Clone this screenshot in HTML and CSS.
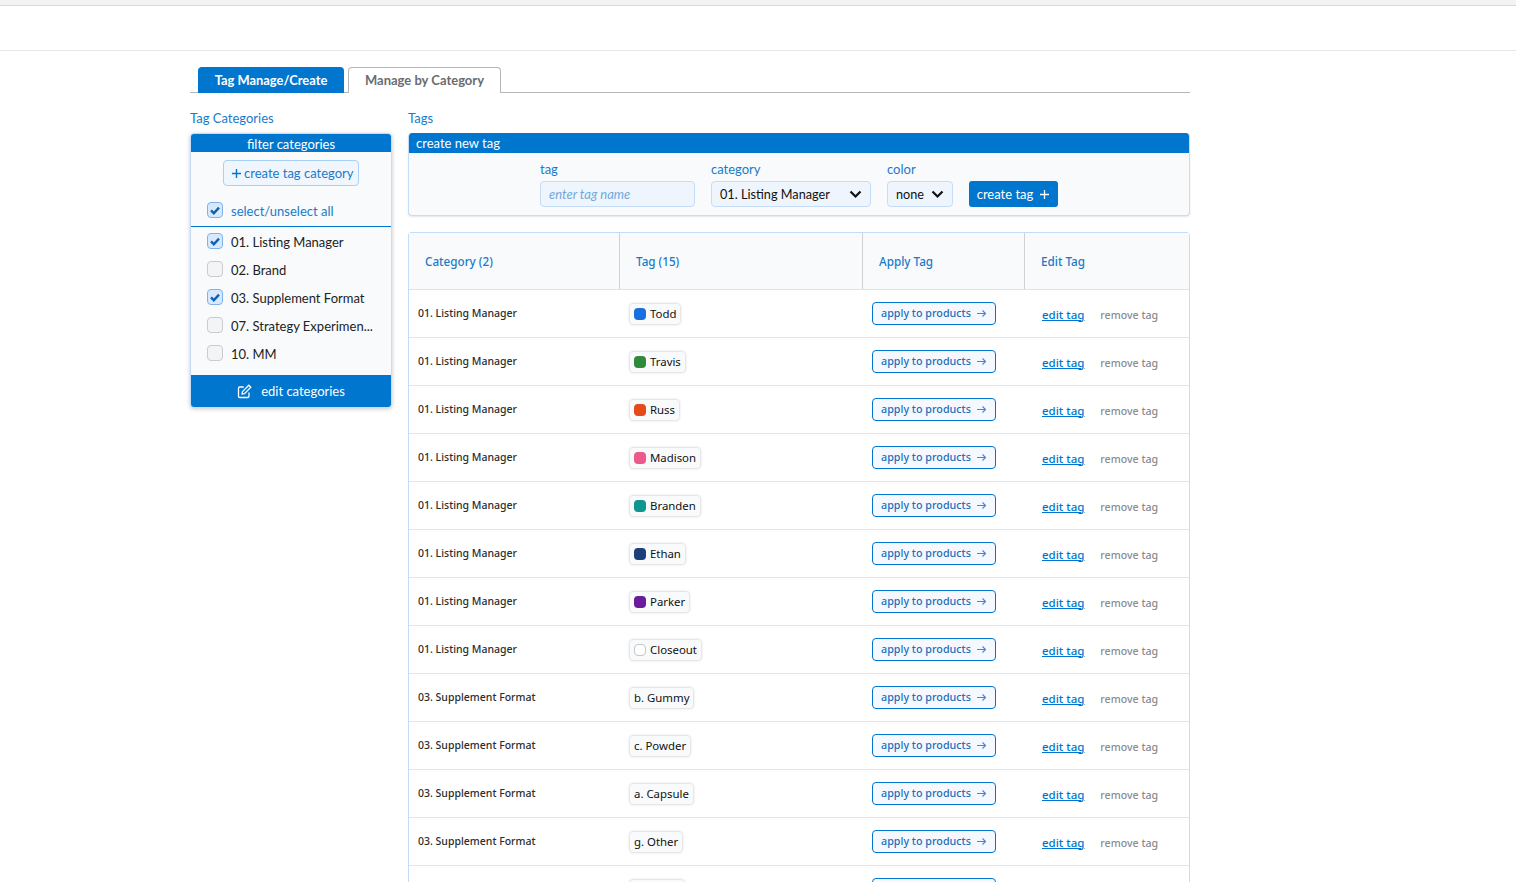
FILE: index.html
```html
<!DOCTYPE html>
<html lang="en">
<head>
<meta charset="utf-8">
<title>Tags</title>
<link rel="stylesheet" href="styles.css">
</head>
<body>
<div class="topband"></div>
<div class="topbar"></div>
<main class="page">
  <nav class="tabs">
    <a class="tab active">Tag Manage/Create</a>
    <a class="tab">Manage by Category</a>
  </nav>
  <div class="columns">
    <aside class="side">
      <h2 class="title">Tag Categories</h2>
      <div class="filter">
        <div class="bar center">filter categories</div>
        <div class="create-wrap"><button class="outline-btn"><svg width="11" height="11" viewBox="0 0 11 11"><path d="M5.5 1v9M1 5.5h9" stroke="#0176ce" stroke-width="1.4" fill="none"/></svg>create tag category</button></div>
        <label class="check all"><span class="box on"><svg width="12" height="12" viewBox="0 0 12 12"><path d="M2 6.4l2.8 2.8L10 3.6" stroke="#0e62b0" stroke-width="2.4" fill="none"/></svg></span><span class="blue">select/unselect all</span></label>
        <div class="list">
          <label class="check"><span class="box on"><svg width="12" height="12" viewBox="0 0 12 12"><path d="M2 6.4l2.8 2.8L10 3.6" stroke="#0e62b0" stroke-width="2.4" fill="none"/></svg></span>01. Listing Manager</label>
          <label class="check"><span class="box"></span>02. Brand</label>
          <label class="check"><span class="box on"><svg width="12" height="12" viewBox="0 0 12 12"><path d="M2 6.4l2.8 2.8L10 3.6" stroke="#0e62b0" stroke-width="2.4" fill="none"/></svg></span>03. Supplement Format</label>
          <label class="check"><span class="box"></span>07. Strategy Experimen...</label>
          <label class="check"><span class="box"></span>10. MM</label>
        </div>
        <div class="edit-cats"><svg width="15" height="15" viewBox="0 0 15 15" fill="none" stroke="#fff" stroke-width="1.3"><path d="M12 8.5v3.7a1.3 1.3 0 0 1-1.3 1.3H2.8a1.3 1.3 0 0 1-1.3-1.3V4.3A1.3 1.3 0 0 1 2.8 3h4"/><path d="M5.5 7.6L11.8 1.2l2 2-6.300 6.400-2.400.4z"/></svg>edit categories</div>
      </div>
    </aside>
    <section class="content">
      <h2 class="title">Tags</h2>
      <div class="newtag">
        <div class="bar">create new tag</div>
        <form class="newtag-form">
          <div class="field f-tag"><span class="lab">tag</span><span class="input ph">enter tag name</span></div>
          <div class="field f-cat"><span class="lab">category</span><span class="input sel">01. Listing Manager<svg width="13" height="9" viewBox="0 0 13 9"><path d="M1.500 1.500l5 5 5-5" stroke="#111" stroke-width="2.200" fill="none"/></svg></span></div>
          <div class="field f-col"><span class="lab">color</span><span class="input sel">none<svg width="13" height="9" viewBox="0 0 13 9"><path d="M1.500 1.500l5 5 5-5" stroke="#111" stroke-width="2.200" fill="none"/></svg></span></div>
          <button type="button" class="solid-btn">create tag<svg width="11" height="11" viewBox="0 0 11 11"><path d="M5.500 1v9M1 5.500h9" stroke="#fff" stroke-width="1.300" fill="none"/></svg></button>
        </form>
      </div>
      <div class="table">
        <div class="row head">
          <div>Category (2)</div><div>Tag (15)</div><div>Apply Tag</div><div>Edit Tag</div>
        </div>
        <div id="rows"></div>
      </div>
    </section>
  </div>
</main>
<script src="app.js"></script>
</body>
</html>
```
FILE: styles.css
```css
* { box-sizing: border-box; }
html, body { margin: 0; height: 882px; overflow: hidden; background: #fff; }
body { font-family: Lato, "Noto Sans", sans-serif; color: #1f2328; }
.topband { height: 6px; background: #f1f3f5; border-bottom: 1px solid #d6d8dc; }
.topbar { height: 45px; border-bottom: 1px solid #e6e7e9; }
.page { width: 1000px; margin-left: 190px; padding-top: 16px; }
.tabs { display: flex; gap: 4px; padding-left: 8px; height: 26px; border-bottom: 1px solid #b4b6b9; }
.tab { height: 26px; padding-bottom: 1px; display: flex; align-items: center; justify-content: center; font-size: 13px; font-weight: 700; border-radius: 4px 4px 0 0; width: 153px; color: #6a6c70; border: 1px solid #b4b6b9; border-bottom: 0; background: #fff; }
.tab.active { width: 146px; background: #0176ce; border-color: #0176ce; color: #fff; font-size: 12.900px; }
.columns { display: flex; gap: 16px; padding-top: 17px; }
.title { margin: 0 0 7px; font-size: 13px; line-height: 16px; font-weight: 400; color: #1a7ac9; }
.side { width: 202px; flex: none; }
.content { width: 782px; flex: none; }
.filter { border: 1px solid #c4dcf7; border-radius: 4px; background: #f8fafc; overflow: hidden; box-shadow: 0 1px 4px rgba(0,0,0,.22); }
.bar { background: #0176ce; color: #fff; font-size: 13px; line-height: 19px; height: 19px; padding-left: 8px; }
.bar.center { height: 18px; line-height: 20px; padding: 0; text-align: center; }
.create-wrap { display: flex; justify-content: center; padding-top: 8px; }
.outline-btn { display: flex; align-items: center; gap: 2px; height: 26px; width: 136px; padding: 0 0 0 7px; font: 13px Lato, sans-serif; color: #1a7ac9; background: #f0f6fe; border: 1px solid #a9d0f5; border-radius: 4px; white-space: nowrap; }
.check { display: flex; align-items: center; gap: 8px; height: 28px; padding-left: 16px; font-size: 13px; color: #222; }
.check.all { height: 28px; margin-top: 11px; }
.blue { color: #1a7ac9; }
.box { width: 16px; height: 16px; margin-bottom: 2px; border: 1px solid #c9cccf; border-radius: 4px; background: #f3f4f6; display: flex; align-items: center; justify-content: center; }
.box.on { background: #d9e9fd; border-color: #7fb2ea; }
.list { border-top: 1px solid #0176ce; height: 149px; padding-top: 1px; margin-top: 1px; }
.edit-cats { background: #0176ce; color: #fff; height: 32px; display: flex; align-items: center; justify-content: center; gap: 9px; font-size: 13px; }
.newtag { border: 1px solid #c4dcf7; border-top: 0; border-radius: 4px; background: #f8fafc; height: 83px; overflow: hidden; box-shadow: 0 1px 2px rgba(0,0,0,.1); }
.newtag .bar { margin: 0 -1px; height: 20px; line-height: 21px; }
.newtag-form { display: flex; align-items: flex-end; padding: 8px 0 0 131px; }
.field { display: flex; flex-direction: column; gap: 4px; }
.lab { font-size: 13px; line-height: 16px; color: #1a7ac9; }
.input { height: 26px; display: flex; align-items: center; font-size: 12.700px; color: #111; border: 1px solid #c4dcf7; border-radius: 4px; background: #eff5fd; padding: 0 8px; justify-content: space-between; }
.ph { font-style: italic; color: #6fa9dc; font-size: 13px; }
.f-tag { width: 155px; margin-right: 16px; }
.f-cat { width: 160px; margin-right: 16px; }
.f-col { width: 66px; margin-right: 16px; }
.solid-btn { height: 26px; width: 89px; display: flex; align-items: center; justify-content: center; gap: 6px; color: #fff; background: #0176ce; border: 0; border-radius: 3px; font: 13px Lato, sans-serif; padding-bottom: 1px; }
.table { margin-top: 16px; border: 1px solid #c4dcf7; border-bottom: 0; border-radius: 4px 4px 0 0; font-family: "Noto Sans", sans-serif; }
.row { display: grid; grid-template-columns: 210px 243px 162px 1fr; height: 48px; border-bottom: 1px solid #e2e5ea; }
.row.head { height: 57px; background: #f8fafc; color: #1a7ac9; font-size: 11.700px; font-weight: 500; border-bottom: 1px solid #dfe2e6; }
.row.head > div { display: flex; align-items: center; padding-left: 16px; border-left: 1px solid #cfd1d4; }
.row.head > div:first-child { border-left: 0; }
.cell { display: flex; align-items: center; }
.c-cat { padding: 0 0 2px 9px; font-size: 10.500px; font-weight: 500; color: #2a2d31; white-space: nowrap; }
.c-tag { padding-left: 11px; }
.pill { display: flex; align-items: center; gap: 4px; height: 20px; padding: 0 4px; font-size: 11.400px; color: #111; background: #f8fafc; border-radius: 3px; box-shadow: 0 0 3px rgba(0,0,0,.28); }
.dot { width: 12px; height: 12px; border-radius: 4px; }
.dot.empty { background: #fff; border: 1px solid #c4c6c9; }
.c-apply { padding-left: 10px; }
.apply { display: flex; align-items: center; gap: 5px; height: 23px; width: 124px; padding: 0 0 1px 8px; font-size: 10.750px; font-weight: 500; color: #1d6fb8; background: #f5f9ff; border: 1px solid #0176ce; border-radius: 4px; white-space: nowrap; }
.c-edit { padding: 3px 0 0 18px; gap: 16px; font-size: 10.600px; white-space: nowrap; }
.edit { color: #0176ce; font-size: 11.500px; font-weight: 500; text-decoration: underline; margin-bottom: 2px; }
.remove { color: #8a8c8f; font-weight: 500; }
```
FILE: app.js
```js
const L = "01. Listing Manager", S = "03. Supplement Format";
const data = [
  [L, "Todd", "#1a6fe0"], [L, "Travis", "#2f8a3c"], [L, "Russ", "#e64a19"],
  [L, "Madison", "#ec5a8c"], [L, "Branden", "#0f9690"], [L, "Ethan", "#1c3f7c"],
  [L, "Parker", "#6a1b9a"], [L, "Closeout", "empty"], [S, "b. Gummy"], [S, "c. Powder"],
  [S, "a. Capsule"], [S, "g. Other"], [S, "d. Liquid"]
];
const arrow = '<svg width="11" height="9" viewBox="0 0 11 9" fill="none" stroke="#4a86c0" stroke-width="1.100"><path d="M1 4.500h8.500M6.500 1.500l3 3-3 3"/></svg>';
document.getElementById("rows").innerHTML = data.map(([c, t, col]) => {
  let dot = "";
  if (col === "empty") dot = '<span class="dot empty"></span>';
  else if (col) dot = `<span class="dot" style="background:${col}"></span>`;
  return `<div class="row"><div class="cell c-cat">${c}</div><div class="cell c-tag"><span class="pill">${dot}${t}</span></div><div class="cell c-apply"><span class="apply">apply to products ${arrow}</span></div><div class="cell c-edit"><a class="edit">edit tag</a><span class="remove">remove tag</span></div></div>`;
}).join("");
```
